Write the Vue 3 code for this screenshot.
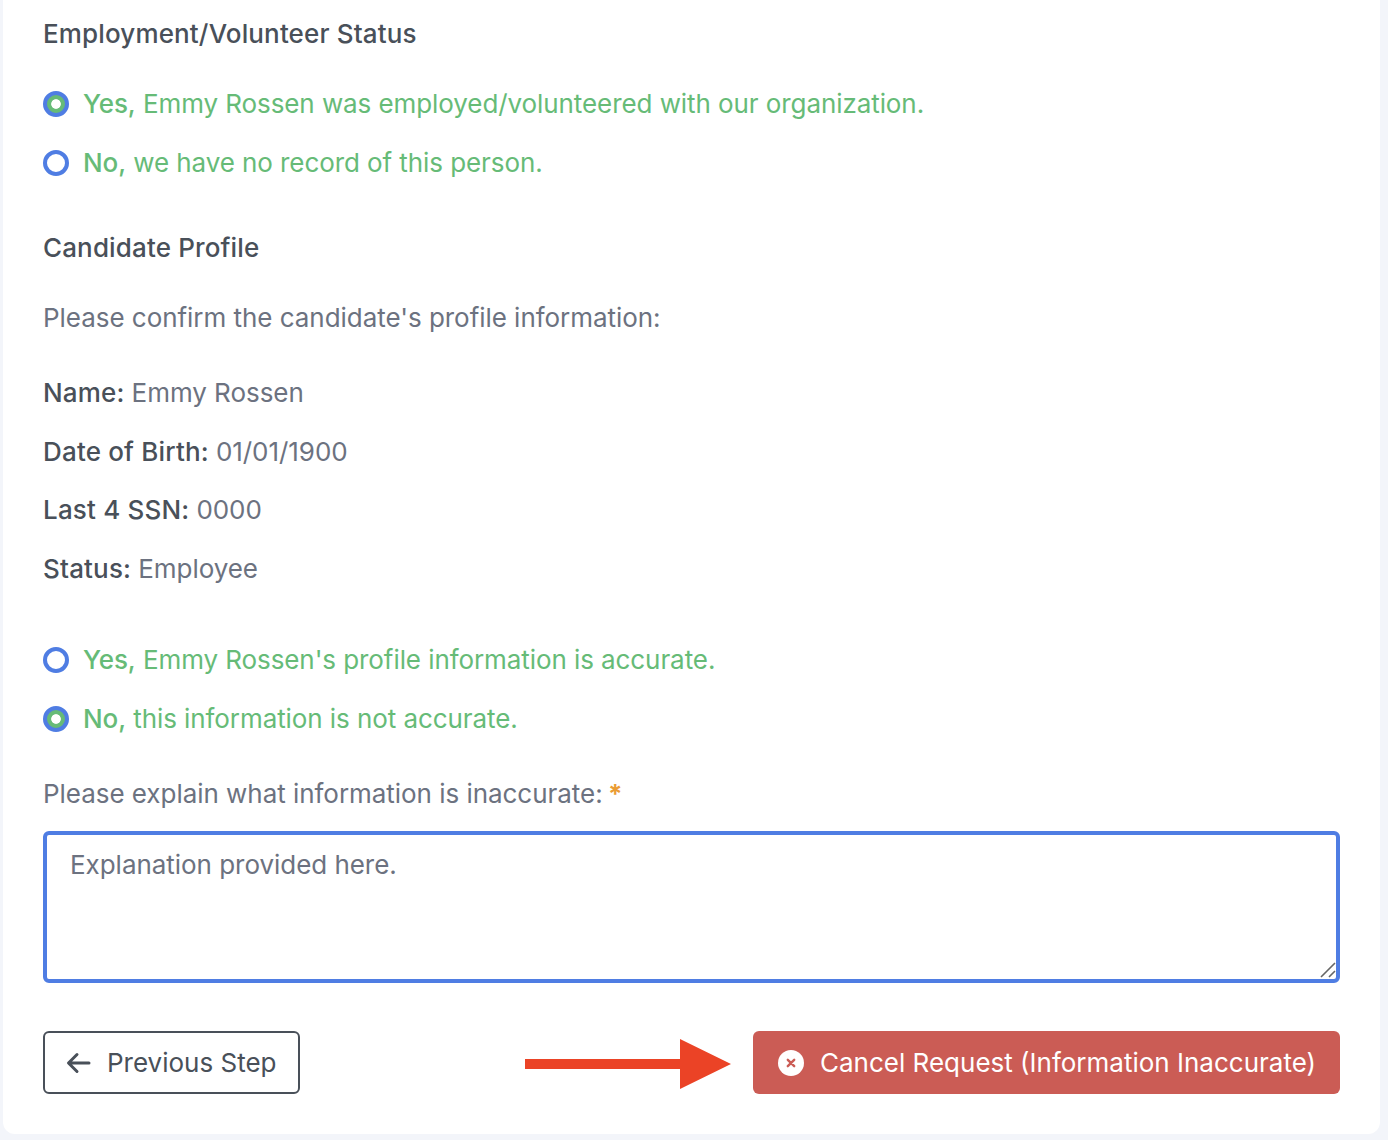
<template>
  <div class="page">
    <div class="card">
      <h3 class="section-title first">Employment/Volunteer Status</h3>

      <div class="radio-group">
        <label v-for="opt in employmentOptions" :key="opt.value" class="radio-row">
          <input v-model="employment" type="radio" name="employment" :value="opt.value" />
          <span><span class="lead">{{ opt.lead }}</span> {{ opt.text }}</span>
        </label>
      </div>

      <h3 class="section-title profile-title">Candidate Profile</h3>
      <p class="intro">Please confirm the candidate's profile information:</p>

      <dl class="profile">
        <div v-for="item in profile" :key="item.label" class="profile-row">
          <dt>{{ item.label }}:</dt>
          <dd>{{ item.value }}</dd>
        </div>
      </dl>

      <div class="radio-group accuracy">
        <label v-for="opt in accuracyOptions" :key="opt.value" class="radio-row">
          <input v-model="accuracy" type="radio" name="accuracy" :value="opt.value" />
          <span><span class="lead">{{ opt.lead }}</span> {{ opt.text }}</span>
        </label>
      </div>

      <label class="explain-label" for="explain">
        Please explain what information is inaccurate:
        <span class="required">*</span>
      </label>
      <div class="explain-wrap">
        <textarea id="explain" v-model="explanation" class="explain"></textarea>
        <svg class="grip" width="16" height="16" viewBox="0 0 16 16" stroke="#666" stroke-width="1.6">
          <path d="M1 15L15 1M9 15l6-6" />
        </svg>
      </div>

      <div class="actions">
        <button type="button" class="btn btn-prev">
          <svg width="26" height="26" viewBox="0 0 26 26" fill="none" stroke="currentColor" stroke-width="3" stroke-linecap="round" stroke-linejoin="round">
            <path d="M23 13H3M11 4.5L2.5 13l8.5 8.5" />
          </svg>
          Previous Step
        </button>

        <svg class="callout" width="206" height="50" viewBox="0 0 206 50">
          <path d="M0 20h155V0l51 25-51 25V30H0z" fill="#eb4326" />
        </svg>

        <button type="button" class="btn btn-cancel">
          <svg width="26" height="26" viewBox="0 0 26 26">
            <circle cx="13" cy="13" r="13" fill="#fff" />
            <path d="M9.8 9.8l6.4 6.4M16.2 9.8l-6.4 6.4" stroke="#cb5c55" stroke-width="2.4" stroke-linecap="round" />
          </svg>
          Cancel Request (Information Inaccurate)
        </button>
      </div>
    </div>
  </div>
</template>

<script setup>
import { ref } from 'vue'

const employment = ref('yes')
const accuracy = ref('no')
const explanation = ref('Explanation provided here.')

const employmentOptions = [
  { value: 'yes', lead: 'Yes,', text: 'Emmy Rossen was employed/volunteered with our organization.' },
  { value: 'no', lead: 'No,', text: 'we have no record of this person.' }
]

const accuracyOptions = [
  { value: 'yes', lead: 'Yes,', text: "Emmy Rossen's profile information is accurate." },
  { value: 'no', lead: 'No,', text: 'this information is not accurate.' }
]

const profile = [
  { label: 'Name', value: 'Emmy Rossen' },
  { label: 'Date of Birth', value: '01/01/1900' },
  { label: 'Last 4 SSN', value: '0000' },
  { label: 'Status', value: 'Employee' }
]
</script>

<style>
html,
body {
  background: #f3f5fa;
}
</style>

<style scoped>
.page {
  height: 1140px;
  padding: 0 8px 6px 3px;
  box-sizing: border-box;
  font-family: Inter, "Liberation Sans", sans-serif;
  font-size: 26px;
  line-height: 38px;
  letter-spacing: -0.04px;
  color: #6c7280;
}

.card {
  height: 100%;
  box-sizing: border-box;
  padding: 15px 40px 0;
  background: #fff;
  border-radius: 0 0 12px 12px;
}

.section-title {
  margin: 0;
  font-size: 26px;
  font-weight: 500;
  letter-spacing: 0.14px;
  color: #495059;
}

.radio-group {
  display: flex;
  flex-direction: column;
  gap: 21px;
  margin-top: 32px;
}

.radio-row {
  display: flex;
  align-items: center;
  gap: 14px;
  letter-spacing: -0.08px;
  color: #66bb77;
}

.lead {
  font-weight: 500;
}

.radio-row input {
  appearance: none;
  width: 26px;
  height: 26px;
  margin: 0;
  flex-shrink: 0;
  box-sizing: border-box;
  border: 4px solid #4f7de3;
  border-radius: 50%;
  background: #fff;
}

.radio-row input:checked {
  background: radial-gradient(circle, #fff 0 4.4px, #66bb77 5.2px);
}

.profile-title {
  margin-top: 47px;
}

.intro {
  margin: 32px 0 0;
}

.profile {
  display: flex;
  flex-direction: column;
  gap: 20.6px;
  margin: 37px 0 0;
}

.profile-row {
  display: flex;
  gap: 7px;
}

.profile-row dt {
  font-weight: 500;
  letter-spacing: 0.18px;
  color: #495059;
}

.profile-row dd {
  margin: 0;
}

.accuracy {
  margin-top: 53.2px;
}

.explain-label {
  display: block;
  margin-top: 37px;
}

.required {
  margin-left: -2px;
  color: #ea9c34;
  font-weight: 700;
}

.explain-wrap {
  position: relative;
  margin-top: 18px;
}

.explain {
  display: block;
  width: 100%;
  height: 152px;
  padding: 11px 23px;
  box-sizing: border-box;
  border: 4px solid #4f7de3;
  border-radius: 6px;
  outline: none;
  resize: none;
  font: inherit;
  letter-spacing: inherit;
  color: #6c7280;
  background: #fff;
}

.grip {
  position: absolute;
  right: 4px;
  bottom: 5px;
  pointer-events: none;
}

.actions {
  position: relative;
  display: flex;
  justify-content: space-between;
  margin-top: 48px;
}

.btn {
  display: flex;
  align-items: center;
  height: 63px;
  box-sizing: border-box;
  border-radius: 6px;
  font: inherit;
  letter-spacing: 0;
  white-space: nowrap;
}

.btn-prev {
  gap: 15px;
  width: 257px;
  padding: 2px 0 0 21px;
  border: 2px solid #495059;
  background: #fff;
  color: #495059;
}

.btn-cancel {
  gap: 16px;
  width: 587px;
  padding: 2px 0 0 25px;
  border: 0;
  background: #cb5c55;
  color: #fff;
}

.callout {
  position: absolute;
  left: 482px;
  top: 8px;
}
</style>
